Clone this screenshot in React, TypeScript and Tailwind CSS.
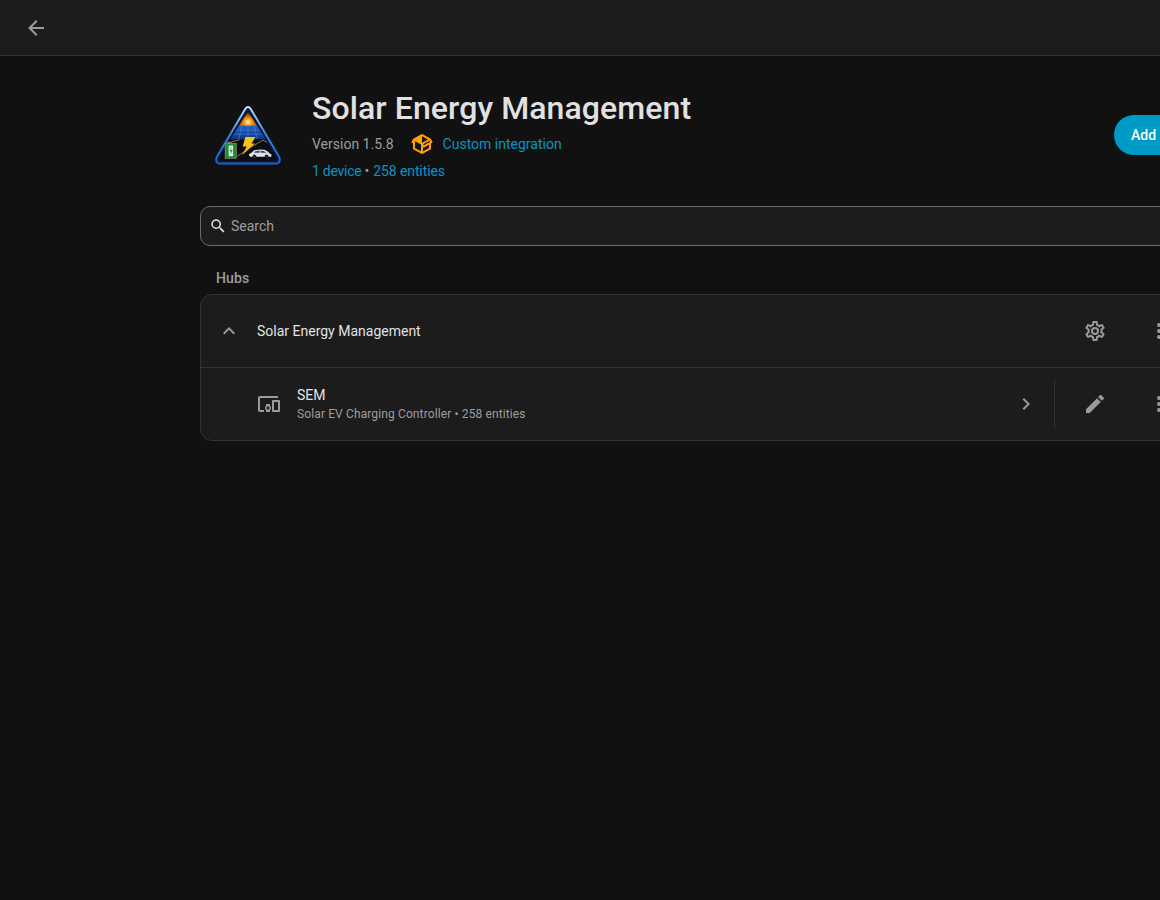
const mdi = {
  arrowLeft: 'M20,11V13H8L13.5,18.5L12.08,19.92L4.16,12L12.08,4.08L13.5,5.5L8,11H20Z',
  magnify:
    'M9.5,3A6.5,6.5 0 0,1 16,9.5C16,11.11 15.41,12.59 14.44,13.73L14.71,14H15.5L20.5,19L19,20.5L14,15.5V14.71L13.73,14.44C12.59,15.41 11.11,16 9.5,16A6.5,6.5 0 0,1 3,9.5A6.5,6.5 0 0,1 9.5,3M9.5,5C7,5 5,7 5,9.5C5,12 7,14 9.5,14C12,14 14,12 14,9.5C14,7 12,5 9.5,5Z',
  chevronUp: 'M7.41,15.41L12,10.83L16.59,15.41L18,14L12,8L6,14L7.41,15.41Z',
  chevronRight: 'M8.59,16.58L13.17,12L8.59,7.41L10,6L16,12L10,18L8.59,16.58Z',
  cog: 'M12,8A4,4 0 0,1 16,12A4,4 0 0,1 12,16A4,4 0 0,1 8,12A4,4 0 0,1 12,8M12,10A2,2 0 0,0 10,12A2,2 0 0,0 12,14A2,2 0 0,0 14,12A2,2 0 0,0 12,10M10,22C9.75,22 9.54,21.82 9.5,21.58L9.13,18.93C8.5,18.68 7.96,18.34 7.44,17.94L4.95,18.95C4.73,19.03 4.46,18.95 4.34,18.73L2.34,15.27C2.21,15.05 2.27,14.78 2.46,14.63L4.57,12.97L4.5,12L4.57,11L2.46,9.37C2.27,9.22 2.21,8.95 2.34,8.73L4.34,5.27C4.46,5.05 4.73,4.96 4.95,5.05L7.44,6.05C7.96,5.66 8.5,5.32 9.13,5.07L9.5,2.42C9.54,2.18 9.75,2 10,2H14C14.25,2 14.46,2.18 14.5,2.42L14.87,5.07C15.5,5.32 16.04,5.66 16.56,6.05L19.05,5.05C19.27,4.96 19.54,5.05 19.66,5.27L21.66,8.73C21.79,8.95 21.73,9.22 21.54,9.37L19.43,11L19.5,12L19.43,13L21.54,14.63C21.73,14.78 21.79,15.05 21.66,15.27L19.66,18.73C19.54,18.95 19.27,19.04 19.05,18.95L16.56,17.95C16.04,18.34 15.5,18.68 14.87,18.93L14.5,21.58C14.46,21.82 14.25,22 14,22H10M11.25,4L10.88,6.61C9.68,6.86 8.62,7.5 7.85,8.39L5.44,7.35L4.69,8.65L6.8,10.2C6.4,11.37 6.4,12.64 6.8,13.8L4.68,15.36L5.43,16.66L7.86,15.62C8.63,16.5 9.68,17.14 10.87,17.38L11.24,20H12.76L13.13,17.39C14.32,17.14 15.37,16.5 16.14,15.62L18.57,16.66L19.32,15.36L17.2,13.81C17.6,12.64 17.6,11.37 17.2,10.2L19.31,8.65L18.56,7.35L16.15,8.39C15.38,7.5 14.32,6.86 13.12,6.62L12.75,4H11.25Z',
  pencil:
    'M20.71,7.04C21.1,6.65 21.1,6 20.71,5.63L18.37,3.29C18,2.9 17.35,2.9 16.96,3.29L15.12,5.12L18.87,8.87M3,17.25V21H6.75L17.81,9.93L14.06,6.18L3,17.25Z',
  dots: 'M12,16A2,2 0 0,1 14,18A2,2 0 0,1 12,20A2,2 0 0,1 10,18A2,2 0 0,1 12,16M12,10A2,2 0 0,1 14,12A2,2 0 0,1 12,14A2,2 0 0,1 10,12A2,2 0 0,1 12,10M12,4A2,2 0 0,1 14,6A2,2 0 0,1 12,8A2,2 0 0,1 10,6A2,2 0 0,1 12,4Z',
  devices:
    'M3 6H21V4H3C1.9 4 1 4.9 1 6V18C1 19.1 1.9 20 3 20H7V18H3V6M13 12H9V13.78C8.39 14.33 8 15.11 8 16C8 16.89 8.39 17.67 9 18.22V20H13V18.22C13.61 17.67 14 16.88 14 16S13.61 14.33 13 13.78V12M11 17.5C10.17 17.5 9.5 16.83 9.5 16S10.17 14.5 11 14.5 12.5 15.17 12.5 16 11.83 17.5 11 17.5M22 8H16C15.5 8 15 8.5 15 9V19C15 19.5 15.5 20 16 20H22C22.5 20 23 19.5 23 19V9C23 8.5 22.5 8 22 8M21 18H17V10H21V18Z',
  packageVariant:
    'M2,10.96C1.5,10.68 1.35,10.07 1.63,9.59L3.13,7C3.24,6.8 3.41,6.66 3.6,6.58L11.43,2.18C11.59,2.06 11.79,2 12,2C12.21,2 12.41,2.06 12.57,2.18L20.47,6.62C20.66,6.72 20.82,6.88 20.91,7.08L22.36,9.6C22.64,10.08 22.47,10.69 22,10.96L21,11.54V16.5C21,16.88 20.79,17.21 20.47,17.38L12.57,21.82C12.41,21.94 12.21,22 12,22C11.79,22 11.59,21.94 11.43,21.82L3.53,17.38C3.21,17.21 3,16.88 3,16.5V10.96C2.7,11.13 2.32,11.14 2,10.96M12,4.15V4.15L12,10.85V10.85L17.96,7.5L12,4.15M5,15.91L11,19.29V12.58L5,9.21V15.91M19,15.91V12.69L14,15.59C13.67,15.77 13.29,15.76 13,15.6V19.29L19,15.91M13.85,13.36L20.13,9.73L19.55,8.72L13.27,12.35L13.85,13.36Z',
};

function Icon({ path, size = 24, className }: { path: string; size?: number; className?: string }) {
  return (
    <svg viewBox="0 0 24 24" width={size} height={size} fill="currentColor" className={className}>
      <path d={path} />
    </svg>
  );
}

function IconButton({ path }: { path: string }) {
  return (
    <button className="flex h-12 w-12 shrink-0 items-center justify-center text-[#9a9a9a]">
      <Icon path={path} />
    </button>
  );
}

function Logo() {
  return (
    <svg viewBox="0 0 64 64" width={68} height={68} className="mt-3 ml-[-2px] shrink-0">
      <defs>
        <linearGradient id="rim" x1="0" y1="0" x2="0" y2="1">
          <stop offset="0" stopColor="#cfe6fa" />
          <stop offset="0.45" stopColor="#3a8be0" />
          <stop offset="1" stopColor="#1a5fd0" />
        </linearGradient>
        <linearGradient id="sky" x1="0" y1="0" x2="0" y2="1">
          <stop offset="0" stopColor="#2c1608" />
          <stop offset="1" stopColor="#b85a0a" />
        </linearGradient>
        <linearGradient id="panel" x1="0" y1="0" x2="0" y2="1">
          <stop offset="0" stopColor="#1f5fc2" />
          <stop offset="1" stopColor="#0e3686" />
        </linearGradient>
        <radialGradient id="sun">
          <stop offset="0" stopColor="#fff6b0" />
          <stop offset="0.35" stopColor="#ffa31a" />
          <stop offset="1" stopColor="#ff8a00" stopOpacity="0" />
        </radialGradient>
        <clipPath id="tri">
          <path d="M32 8 L59.500 51.500 Q60.500 54.500 58 54.500 L6 54.500 Q3.500 54.500 4.500 51.500 Z" />
        </clipPath>
      </defs>
      <path d="M29.500 4 Q32 1.200 34.500 4 L63 51 Q65 57 59 58.500 L5 58.500 Q-1 57 1 51 Z" fill="#071a3f" />
      <path
        d="M29.800 5 Q32 2.600 34.200 5 L61.500 51 Q63 56.500 58.500 57 L5.500 57 Q1 56.500 2.500 51 Z"
        fill="none"
        stroke="url(#rim)"
        strokeWidth="1.800"
      />
      <g clipPath="url(#tri)">
        <rect x="0" y="5" width="64" height="52" fill="#0b0d12" />
        <rect x="0" y="5" width="64" height="17" fill="url(#sky)" />
        <circle cx="32" cy="18" r="9" fill="url(#sun)" />
        <path d="M21.500 21.500 H42.500 L49 34 H15 Z" fill="url(#panel)" />
        <path
          d="M19.500 25.500 H44.500 M17.500 29.500 H46.500 M26 21.500 L23.500 34 M32 21.500 V34 M38 21.500 L40.500 34"
          stroke="#5f9be0"
          strokeWidth="0.4"
          fill="none"
        />
        <path d="M22 50 L34 42 L46 35 L50 37" stroke="#c99a2a" strokeWidth="0.7" fill="none" />
        <path d="M14 37.500 L24 34.500" stroke="#c99a2a" strokeWidth="0.7" />
      </g>
      <rect x="10.500" y="38" width="10.500" height="14" fill="#1f8a38" stroke="#8a8a70" strokeWidth="0.7" />
      <rect x="12.500" y="36.600" width="4" height="1.400" fill="#8a8a70" />
      <rect x="13.800" y="40" width="4.200" height="10" fill="#d6f0da" />
      <path d="M16.500 41 L14.800 45.300 H16.200 L15.400 49 L17.500 44.300 H16 Z" fill="#1f8a38" />
      <path d="M29.500 32 H39 L35.300 38 H38.500 L26.500 49 L30.800 41 H27 Z" fill="#f7c21e" />
      <path
        d="M33 48 Q35.500 46.800 37.500 44.600 Q43 43.200 47.500 44 Q50.500 45 52.500 47.500 L54 48.500 V50.500 H34 Q32.500 49.700 33 48 Z"
        fill="#dfe3e8"
      />
      <path d="M39 45.300 L43 44.600 V46.800 H37.500 Z M44 44.600 Q47.500 44.800 49.500 46.800 H44 Z" fill="#3b4a5c" />
      <circle cx="38" cy="50.300" r="1.800" fill="#20242b" />
      <circle cx="49.500" cy="50.300" r="1.800" fill="#20242b" />
    </svg>
  );
}

export default function App() {
  return (
    <div
      className="h-[900px] w-[1160px] overflow-hidden bg-[#111111] text-[#e1e1e1]"
      style={{ fontFamily: 'Roboto, sans-serif' }}
    >
      <header className="flex h-14 items-center border-b border-[#333333] bg-[#1c1c1c] pl-3 text-[#9b9b9b]">
        <button className="flex h-12 w-12 items-center justify-center">
          <Icon path={mdi.arrowLeft} />
        </button>
      </header>

      <main className="w-[1200px] pl-[200px]">
        <div className="flex h-[150px] w-[1000px] items-center pl-4">
          <Logo />
          <div className="ml-[30px] flex flex-col pt-2">
            <h1 className="text-[32px] leading-10 font-medium tracking-[0.09px]">Solar Energy Management</h1>
            <div className="mt-1 flex h-6 items-center text-sm text-[#9e9e9e]">
              <span>Version 1.5.8</span>
              <Icon path={mdi.packageVariant} className="ml-4 text-[#ff9f00]" />
              <a className="ml-[9px] text-[#0a93c2]">Custom integration</a>
            </div>
            <div className="mt-[3px] flex h-6 items-center text-sm text-[#0a93c2]">
              <a className="tracking-[-0.25px]">1 device</a>
              <span className="mr-1 ml-[3px] text-[#9e9e9e]">•</span>
              <a className="tracking-[-0.1px]">258 entities</a>
            </div>
          </div>
          <button className="mt-[7px] ml-auto h-10 shrink-0 rounded-full bg-[#009ac7] px-[17px] text-sm font-medium text-white">
            Add hub
          </button>
        </div>

        <div className="flex h-10 w-[1000px] items-center gap-1 rounded-[10px] border border-[#6b6b6b] bg-[#1c1c1c] pl-2 text-[#9e9e9e]">
          <Icon path={mdi.magnify} size={18} className="text-[#e1e1e1]" />
          <span className="text-sm">Search</span>
        </div>

        <div className="mt-6 px-4 pb-2 text-sm leading-4 font-medium tracking-[0.1px] text-[#9e9e9e]">Hubs</div>

        <section className="w-[1000px] rounded-xl border border-[#333333] bg-[#1c1c1c]">
          <div className="flex h-[73px] items-center border-b border-[#333333] pr-4 pl-4">
            <Icon path={mdi.chevronUp} className="text-[#9a9a9a]" />
            <span className="ml-4 text-sm text-[#e1e1e1]">Solar Energy Management</span>
            <div className="ml-auto flex gap-4">
              <IconButton path={mdi.cog} />
              <IconButton path={mdi.dots} />
            </div>
          </div>
          <div className="flex h-[72px] items-center pr-4 pl-14">
            <Icon path={mdi.devices} className="text-[#9a9a9a]" />
            <div className="mb-px ml-4 flex flex-col">
              <span className="text-sm leading-5 text-[#e1e1e1]">SEM</span>
              <span className="mt-px text-xs leading-[17px] tracking-[0.12px] text-[#9e9e9e]">
                Solar EV Charging Controller • 258 entities
              </span>
            </div>
            <Icon path={mdi.chevronRight} className="ml-auto text-[#9a9a9a]" />
            <div className="mx-4 h-12 w-px bg-[#333333]" />
            <div className="flex gap-4">
              <IconButton path={mdi.pencil} />
              <IconButton path={mdi.dots} />
            </div>
          </div>
        </section>
      </main>
    </div>
  );
}
